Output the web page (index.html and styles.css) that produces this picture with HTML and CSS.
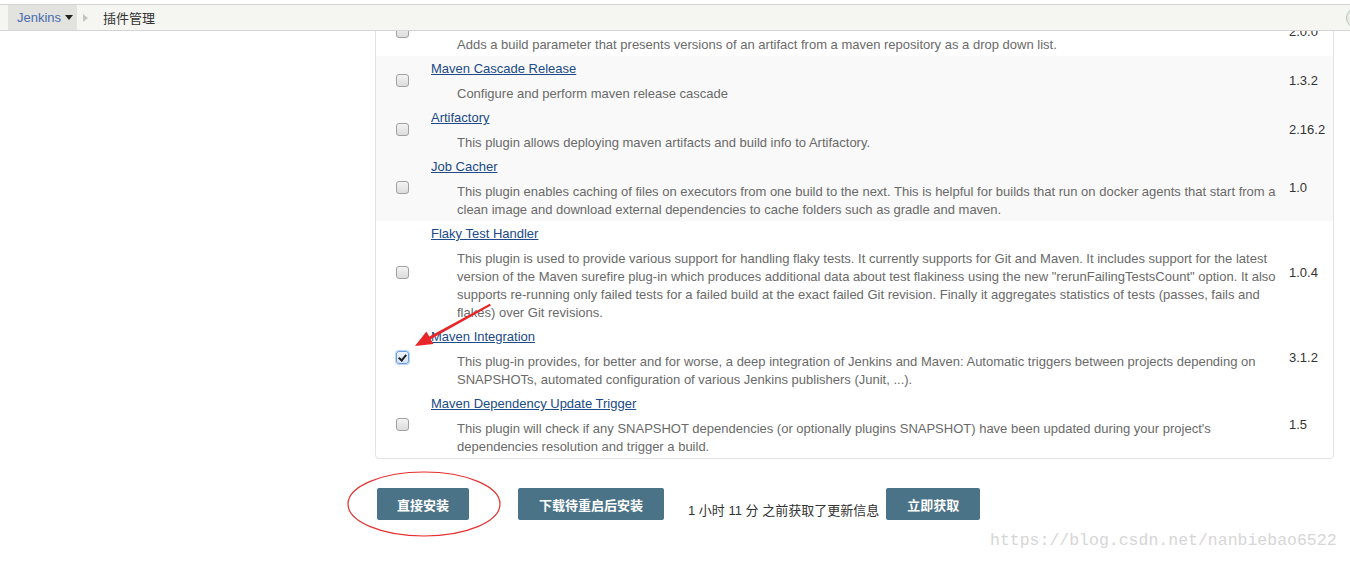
FILE: index.html
```html
<!DOCTYPE html>
<html lang="zh">

<head>
  <meta charset="UTF-8">
  <meta name="viewport" content="width=device-width, initial-scale=1.0">
  <title>插件管理 [Jenkins]</title>
  <link rel="stylesheet" href="styles.css">
</head>

<body>
  <div class="top-strip">
    <div class="breadcrumb-bar">
      <a class="crumb-home" href="#">Jenkins <span class="caret"></span></a>
      <span class="crumb-sep"></span>
      <span class="crumb-current">插件管理</span>
      <span class="help-dot"></span>
    </div>
  </div>

  <div class="page">
    <div class="side-panel"></div>

    <div class="main-panel">
      <div class="plugin-box">
        <table class="plugin-table">
          <colgroup>
            <col class="col-check">
            <col>
            <col class="col-version">
          </colgroup>
          <tbody>
            <tr>
              <td class="check"><input type="checkbox" class="cb"></td>
              <td class="info">
                <div class="name"><a href="#">Maven Artifact ChoiceListProvider (Nexus)</a></div>
                <div class="desc">Adds a build parameter that presents versions of an artifact from a maven repository as a drop down list.</div>
              </td>
              <td class="version">2.0.0</td>
            </tr>
            <tr class="shaded">
              <td class="check"><input type="checkbox" class="cb"></td>
              <td class="info">
                <div class="name"><a href="#">Maven Cascade Release</a></div>
                <div class="desc">Configure and perform maven release cascade</div>
              </td>
              <td class="version">1.3.2</td>
            </tr>
            <tr class="shaded">
              <td class="check"><input type="checkbox" class="cb"></td>
              <td class="info">
                <div class="name"><a href="#">Artifactory</a></div>
                <div class="desc">This plugin allows deploying maven artifacts and build info to Artifactory.</div>
              </td>
              <td class="version">2.16.2</td>
            </tr>
            <tr class="shaded">
              <td class="check"><input type="checkbox" class="cb"></td>
              <td class="info">
                <div class="name"><a href="#">Job Cacher</a></div>
                <div class="desc">This plugin enables caching of files on executors from one build to the next. This is helpful for builds that run on docker agents that start from a clean image and download external dependencies to cache folders such as gradle and maven.</div>
              </td>
              <td class="version">1.0</td>
            </tr>
            <tr>
              <td class="check"><input type="checkbox" class="cb"></td>
              <td class="info">
                <div class="name"><a href="#">Flaky Test Handler</a></div>
                <div class="desc">This plugin is used to provide various support for handling flaky tests. It currently supports for Git and Maven. It includes support for the latest version of the Maven surefire plug-in which produces additional data about test flakiness using the new "rerunFailingTestsCount" option. It also supports re-running only failed tests for a failed build at the exact failed Git revision. Finally it aggregates statistics of tests (passes, fails and flakes) over Git revisions.</div>
              </td>
              <td class="version">1.0.4</td>
            </tr>
            <tr>
              <td class="check"><input type="checkbox" class="cb" checked></td>
              <td class="info">
                <div class="name"><a href="#">Maven Integration</a></div>
                <div class="desc">This plug-in provides, for better and for worse, a deep integration of Jenkins and Maven: Automatic triggers between projects depending on SNAPSHOTs, automated configuration of various Jenkins publishers (Junit, ...).</div>
              </td>
              <td class="version">3.1.2</td>
            </tr>
            <tr>
              <td class="check"><input type="checkbox" class="cb"></td>
              <td class="info">
                <div class="name"><a href="#">Maven Dependency Update Trigger</a></div>
                <div class="desc">This plugin will check if any SNAPSHOT dependencies (or optionally plugins SNAPSHOT) have been updated during your project's dependencies resolution and trigger a build.</div>
              </td>
              <td class="version">1.5</td>
            </tr>
          </tbody>
        </table>
      </div>

      <div class="actions">
        <button class="btn">直接安装</button>
        <button class="btn btn-wide">下载待重启后安装</button>
        <span class="update-info">1 小时 11 分 之前获取了更新信息</span>
        <button class="btn btn-check">立即获取</button>
      </div>
    </div>
  </div>

  <!-- annotations drawn on top of the screenshot -->
  <svg class="annotations" width="1350" height="562" viewBox="0 0 1350 562">
    <ellipse cx="424" cy="504" rx="76" ry="32" fill="none" stroke="#e5302f" stroke-width="1.2" />
    <polygon fill="#e8262a"
      points="415,346 433.5,344 430.6,339.3 491,305.6 489.8,303.8 429.3,336.4 426.4,331.6" />
  </svg>

  <div class="watermark">https://blog.csdn.net/nanbiebao6522</div>
</body>

</html>
```

FILE: styles.css
```css
body {
  margin: 0;
  font-family: "Liberation Sans", Arial, "Noto Sans CJK SC", sans-serif;
  font-size: 13px;
  color: #333;
  background: #fff;
}

.top-strip {
  position: fixed;
  top: 0;
  left: 0;
  right: 0;
  padding-top: 4px;
  background: #fff;
  z-index: 5;
}

.breadcrumb-bar {
  display: flex;
  align-items: stretch;
  height: 25px;
  border-top: 1px solid #d4d4d4;
  border-bottom: 1px solid #d4d4d4;
  background-color: #f5f6f1;
  overflow: hidden;
}

.crumb-home {
  display: flex;
  align-items: center;
  margin-left: 8px;
  padding: 0 4px 0 9px;
  background-color: #e2e3de;
  color: #4a6bb0;
  text-decoration: none;
  line-height: 25px;
}

.caret {
  display: inline-block;
  margin-left: 4px;
  width: 0;
  height: 0;
  border-left: 4px solid transparent;
  border-right: 4px solid transparent;
  border-top: 5px solid #222;
}

.crumb-sep {
  align-self: center;
  margin-left: 6px;
  width: 0;
  height: 0;
  border-top: 4px solid transparent;
  border-bottom: 4px solid transparent;
  border-left: 5px solid #c4c4c4;
}

.crumb-current {
  margin-left: 15px;
  line-height: 25px;
  font-family: "Noto Sans CJK SC", sans-serif;
  color: #333;
}

.help-dot {
  align-self: center;
  margin-left: auto;
  margin-right: -16px;
  width: 18px;
  height: 18px;
  border-radius: 50%;
  border: 1px solid #b9c3b9;
  background: radial-gradient(circle at 60% 50%, #2f6b4c 45%, #e9ede6 47%);
}

.page {
  display: flex;
}

.side-panel {
  width: 375px;
  flex-shrink: 0;
}

.main-panel {
  width: 959px;
  margin-top: 6px;
}

.plugin-box {
  border: 1px solid #e3e3e3;
  border-radius: 4px;
  overflow: hidden;
}

.plugin-table {
  width: 100%;
  border-collapse: collapse;
  table-layout: fixed;
}

.col-check {
  width: 53px;
}

.col-version {
  width: 50px;
}

.plugin-table td {
  padding: 0;
}

.plugin-table tr.shaded {
  background-color: #f9f9f9;
}

td.check {
  text-align: center;
  vertical-align: middle;
}

td.info {
  padding: 4px 0 2px 2px;
  vertical-align: top;
}

td.version {
  padding-left: 6px;
  vertical-align: middle;
  color: #333;
}

.name {
  line-height: 18px;
}

.name a {
  color: #204a87;
  text-decoration: underline;
}

.desc {
  margin: 7px 0 0 26px;
  line-height: 18px;
  color: #6a6a6a;
}

.cb {
  appearance: none;
  -webkit-appearance: none;
  display: block;
  margin: 0 auto;
  width: 13px;
  height: 13px;
  border: 1px solid #a2a2a2;
  border-radius: 3px;
  background: linear-gradient(#f3f3f3, #dcdcdc);
  position: relative;
}

.cb:checked {
  border-color: #6e9de0;
  box-shadow: 0 0 0 1px #bcd4f4;
  background: linear-gradient(#eef4fc, #d6e3f4);
}

.cb:checked::after {
  content: "";
  position: absolute;
  left: 3px;
  top: 1px;
  width: 3px;
  height: 6px;
  border-right: 2px solid #222;
  border-bottom: 2px solid #222;
  transform: rotate(40deg);
}

.actions {
  display: flex;
  align-items: flex-end;
  margin: 29px 0 0 2px;
}

.btn {
  height: 32px;
  padding: 0 20px;
  border: none;
  border-radius: 2px;
  background-color: #4b7388;
  color: #fff;
  font-family: "Noto Sans CJK SC", sans-serif;
  font-size: 13px;
  font-weight: bold;
  cursor: pointer;
}

.btn-wide {
  margin-left: 49px;
  padding: 0 21px;
}

.update-info {
  margin-left: 24px;
  line-height: 18px;
  color: #333;
}

.btn-check {
  margin-left: 7px;
  padding: 0 21px;
}

.annotations {
  position: absolute;
  top: 0;
  left: 0;
  pointer-events: none;
  z-index: 6;
}

.watermark {
  position: absolute;
  left: 990px;
  top: 531px;
  font-family: "Liberation Mono", monospace;
  font-size: 16.5px;
  color: #d6d6d6;
  white-space: nowrap;
}
```
